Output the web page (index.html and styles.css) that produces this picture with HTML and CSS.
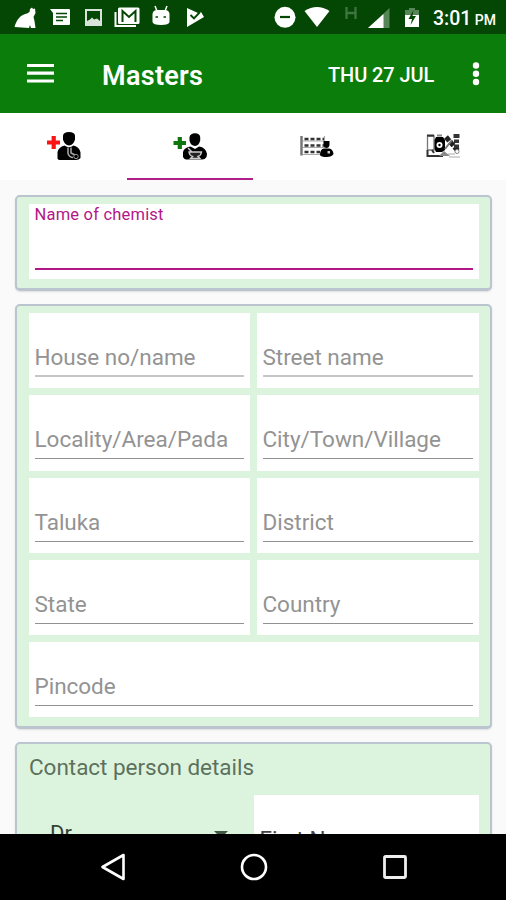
FILE: index.html
```html
<!DOCTYPE html>
<html lang="en">
<head>
<meta charset="utf-8">
<title>Masters</title>
<link rel="stylesheet" href="styles.css">
</head>
<body>
<div class="screen">
  <div class="status-bar">
    <svg class="notifications" width="215" height="34" viewBox="0 0 215 34" fill="#fff">
      <path d="M14.500 27C16.500 20 20 15 27 13.500L29.500 12L30 9L32 7.500L33 9L35 8.500L35.500 13L33.500 17L34.500 21L35.500 28H31L30 25L29 28Z"/>
      <path d="M50 9H69Q70 9 70 10V24Q70 25 69 25H53V13Z"/>
      <path d="M56 13.500H67M56 17H67M56 20.500H63" stroke="#044704" stroke-width="1.700"/>
      <path fill-rule="evenodd" d="M85 9H102V26H85ZM87 11V21L90 19.500L92 17.500L94 19.500L97 18.500L100 21V11Z" opacity=".85"/>
      <path d="M115.500 12V26H136" fill="none" stroke="#fff" stroke-width="2"/>
      <rect x="118" y="7.500" width="21.500" height="16.500" rx="1.500"/>
      <path d="M122.500 22V11L129 17L135.500 11V22" fill="none" stroke="#044704" stroke-width="2"/>
      <path d="M152.500 14Q153 10 157 10H165Q169 10 169.500 14V22Q169 25 161 25Q153 25 152.500 22Z"/>
      <path d="M155 6L157 11M167 6L165 11" stroke="#fff" stroke-width="1.500"/>
      <path d="M155.500 17H158M163.500 17H166" stroke="#044704" stroke-width="1.700"/>
      <path d="M187 8L198 13L201 12L204 17L187 27Z"/>
      <path d="M190.500 15L194 18.500L200 12" fill="none" stroke="#044704" stroke-width="1.900"/>
    </svg>
    <svg class="signals" width="153" height="34" viewBox="270 0 153 34" fill="#fff">
      <circle cx="285" cy="17.300" r="10.500"/>
      <path d="M280 17H290" stroke="#044704" stroke-width="2.200"/>
      <path d="M304.500 11Q317 3 329.500 11L317 27Z"/>
      <path d="M346.500 7V19M355.500 7V19M346.500 13H355.500" fill="none" stroke="#3f7540" stroke-width="2.300"/>
      <path d="M368 28L389.500 8V28Z" fill="#568557"/>
      <path d="M368 28L383.500 14V28Z"/>
      <path d="M405 17V10H409V8H415V10H419V17Z" fill="#568557"/>
      <path d="M405 15H419V27H405Z"/>
      <path d="M413.500 10L408.500 19H412L410.500 25L416 16H412.500Z" fill="#044704"/>
    </svg>
    <span class="clock">3:01 <small>PM</small></span>
  </div>

  <header class="app-bar">
    <svg class="menu" width="27" height="21" viewBox="0 0 27 21" stroke="#fff" stroke-width="3.200"><path d="M0 2.500H27M0 10.200H27M0 18H27"/></svg>
    <h1>Masters</h1>
    <span class="date">THU 27 JUL</span>
    <svg class="more" width="8" height="26" viewBox="0 0 8 26" fill="#fff"><circle cx="4" cy="4.500" r="3.200"/><circle cx="4" cy="12.700" r="3.200"/><circle cx="4" cy="21" r="3.200"/></svg>
  </header>

  <nav class="tabs">
    <div class="tab">
      <svg width="126" height="66" viewBox="0 113 126 66">
        <path d="M47 142.500H60M53.700 136V149" stroke="#fa1515" stroke-width="4.200"/>
        <path d="M63 135.500Q63.500 132 69 132Q74.500 132 75 135.500V139.500Q73.500 145 69 145.500Q64.500 145 63 139.500Z"/>
        <path d="M57.500 158.500V152Q58.500 147 64.500 145.500Q69 149 73.500 145.500Q79.500 147 80.500 152.500V158Q79 160 76 160H60Q58 160 57.500 158.500Z"/>
        <path d="M68 147.500V153.500Q69.500 157.500 73 157.500M71 147.500V153L75 155" fill="none" stroke="#aaa" stroke-width="1.500"/>
        <circle cx="76" cy="156.500" r="2.200" stroke="#999"/>
      </svg>
    </div>
    <div class="tab active">
      <svg width="126" height="64" viewBox="127 113 126 64">
        <path d="M173.500 143H186M179.800 137V149" stroke="#0d760d" stroke-width="4.200"/>
        <path d="M189.500 137Q190.500 133.300 195 133.300Q199.500 133.300 200.200 137V140.500Q199 145.500 195 146Q190.500 145.500 189.500 140.500Z"/>
        <path d="M183 157V152Q184 147.500 190.500 146.500L195 149L199 146.500Q206 147.500 207 154L206.500 157Q205 159.500 202 159.500H186Q184 159 183 157Z"/>
        <path d="M188 148L192 152H201.500Q201 155.500 198 156.500L200 158.500H190.500L192.500 156.500Q189.500 155.500 189 152H193" fill="#222" stroke="#ccc" stroke-width="1.400"/>
      </svg>
    </div>
    <div class="tab">
      <svg width="126" height="66" viewBox="253 113 126 66">
        <path d="M301.500 136V155.500" stroke="#777" stroke-width="2.500"/>
        <path d="M303 141H325M303 147.500H325M303 154.500H321M324.500 136V148" fill="none" stroke="#aaa" stroke-width="1.200"/>
        <path d="M304.500 139H324M304.500 145.500H324M304.500 152H320" stroke="#333" stroke-width="2.700" stroke-dasharray="4 2"/>
        <path d="M323.500 141H329.500V145Q329 148 326.500 148Q324 148 323.500 145Z"/>
        <path d="M320 155Q320 149 324 148.500H329Q333 149 333.500 154Q332 157 326.500 157Q321 157 320 155Z"/>
        <path d="M327.500 151H330V153.500H327.500Z" fill="#ccc"/>
      </svg>
    </div>
    <div class="tab">
      <svg width="126" height="66" viewBox="380 113 126 66">
        <path d="M427.500 136H434V150H427.500Z" fill="#fff" stroke="#777" stroke-width="1.300"/>
        <path d="M427 135.500H434" stroke="#333" stroke-width="2"/>
        <path d="M436 137H443L445 140V150L442 152H436L434.500 149V140Z"/>
        <path d="M437 135.500H442" stroke="#888" stroke-width="2"/>
        <circle cx="439.500" cy="145" r="3" fill="#fff"/>
        <circle cx="439.500" cy="145" r="1.200"/>
        <path d="M446 137L458 151" stroke="#222" stroke-width="5" stroke-dasharray="5 1.500"/>
        <path d="M445 149L452 140" stroke="#777" stroke-width="2"/>
        <path d="M453.500 134H459.500V138H453.500ZM454 139.500H459V143H454ZM454 144.500H459V148H454Z" fill="#333"/>
        <path d="M427.500 150V157M432 150L434 153M427 156H443" fill="none" stroke="#333" stroke-width="2"/>
        <path d="M439 156L444 151L450 156Z" fill="#888"/>
        <path d="M448 154H455M449 157H460" stroke="#aaa"/>
        <circle cx="457" cy="151.500" r="2" fill="#fff" stroke="#888"/>
      </svg>
    </div>
  </nav>

  <main class="content">
    <section class="card name-card">
      <div class="field focused"><span>Name of chemist</span></div>
    </section>
    <section class="card address-card">
      <div class="field soft"><span>House no/name</span></div>
      <div class="field soft"><span>Street name</span></div>
      <div class="field"><span>Locality/Area/Pada</span></div>
      <div class="field"><span>City/Town/Village</span></div>
      <div class="field"><span>Taluka</span></div>
      <div class="field"><span>District</span></div>
      <div class="field"><span>State</span></div>
      <div class="field"><span>Country</span></div>
      <div class="field wide"><span>Pincode</span></div>
    </section>
    <section class="card contact-card">
      <h2>Contact person details</h2>
      <div class="contact-row">
        <div class="select"><span>Dr.</span><i class="arrow"></i></div>
        <div class="field first-name"><span>First Name</span></div>
      </div>
    </section>
  </main>

  <footer class="system-nav">
    <svg width="24" height="28" viewBox="0 0 24 28" fill="none" stroke="#fff" stroke-width="2.600" stroke-linejoin="round"><path d="M22.500 2V26L1.500 14Z"/></svg>
    <svg width="28" height="28" viewBox="0 0 28 28" fill="none" stroke="#fff" stroke-width="2.600"><circle cx="14" cy="14" r="12"/></svg>
    <svg width="24" height="26" viewBox="0 0 24 26" fill="none" stroke="#eee" stroke-width="2.800"><rect x="1.500" y="2.500" width="21" height="21" rx="1"/></svg>
  </footer>
</div>
</body>
</html>
```
FILE: styles.css
```css
* { box-sizing: border-box; }
body { margin: 0; font-family: Roboto, "Liberation Sans", sans-serif; }
svg { display: block; flex: none; }
.screen {
  width: 506px;
  height: 900px;
  display: flex;
  flex-direction: column;
  overflow: hidden;
  background: #fafafa;
}
.status-bar {
  flex: none;
  height: 34px;
  display: flex;
  background: #044704;
  color: #fff;
}
.signals { margin-left: 55px; }
.clock { margin-left: 10px; font-size: 19.500px; line-height: 37px; font-weight: 500; white-space: nowrap; }
.clock small { font-size: 14px; margin-left: -1.500px; }
.app-bar {
  flex: none;
  height: 79px;
  display: flex;
  align-items: center;
  padding-left: 27px;
  background: #0b7d0b;
  color: #fff;
}
.app-bar h1 { width: 226px; margin: 4px 0 0 48px; font-size: 27px; font-weight: 600; line-height: 32px; letter-spacing: .3px; }
.date { width: 143.500px; font-size: 20px; font-weight: 500; line-height: 24px; margin-top: 2px; white-space: nowrap; letter-spacing: -.1px; }
.tabs { flex: none; height: 67px; display: grid; grid-template-columns: 127px 126px 127px 126px; background: #fff; }
.tab.active { border-bottom: 2px solid #b02088; }
.content { flex: none; height: 654px; padding: 15px 14px 0 15px; overflow: hidden; }
.card {
  border: 2px solid #bac5cf;
  border-bottom-width: 3px;
  border-radius: 5px;
  background: #dcf4dd;
  box-shadow: 0 1px 2px #ddd;
}
.name-card { height: 96px; padding: 7px 11px 0 12px; }
.address-card {
  height: 425px;
  margin-top: 13px;
  padding: 7px 11px 0 12px;
  display: grid;
  grid-template-columns: 221px 222px;
  grid-template-rows: repeat(5, 75.300px);
  gap: 7px;
}
.field {
  height: 75.300px;
  padding: 31px 6px 0 5.500px;
  background: #fff;
  color: #939393;
  font-size: 22.500px;
  line-height: 26px;
  white-space: nowrap;
}
.field span { display: block; height: 33px; border-bottom: 1px solid #929292; letter-spacing: -.02px; }
.field.soft span { border-bottom: 2px solid #c6c6c6; }
.field.focused { padding-top: 0; color: #b31686; font-size: 16.500px; line-height: 21px; }
.field.focused span { height: 66px; border-bottom: 2px solid #b31686; letter-spacing: .2px; }
.wide { grid-column: span 2; }
.contact-card { height: 180px; margin-top: 13px; padding: 8px 11px 0 12px; }
.contact-card h2 { margin: 0; height: 43px; font-size: 22.500px; font-weight: 400; line-height: 31px; color: #5c715d; letter-spacing: -.03px; }
.contact-row { display: flex; }
.select { width: 225px; padding: 26px 26px 0 21px; display: flex; justify-content: space-between; font-size: 22px; line-height: 26px; color: #344235; }
.arrow { width: 0; height: 0; margin-top: 10px; border: solid transparent; border-width: 7px 7px 0; border-top-color: #455647; }
.first-name { width: 225px; color: #444; }
.system-nav { flex: none; height: 66px; display: flex; align-items: center; gap: 115px; padding-left: 101px; background: #000; }
```
